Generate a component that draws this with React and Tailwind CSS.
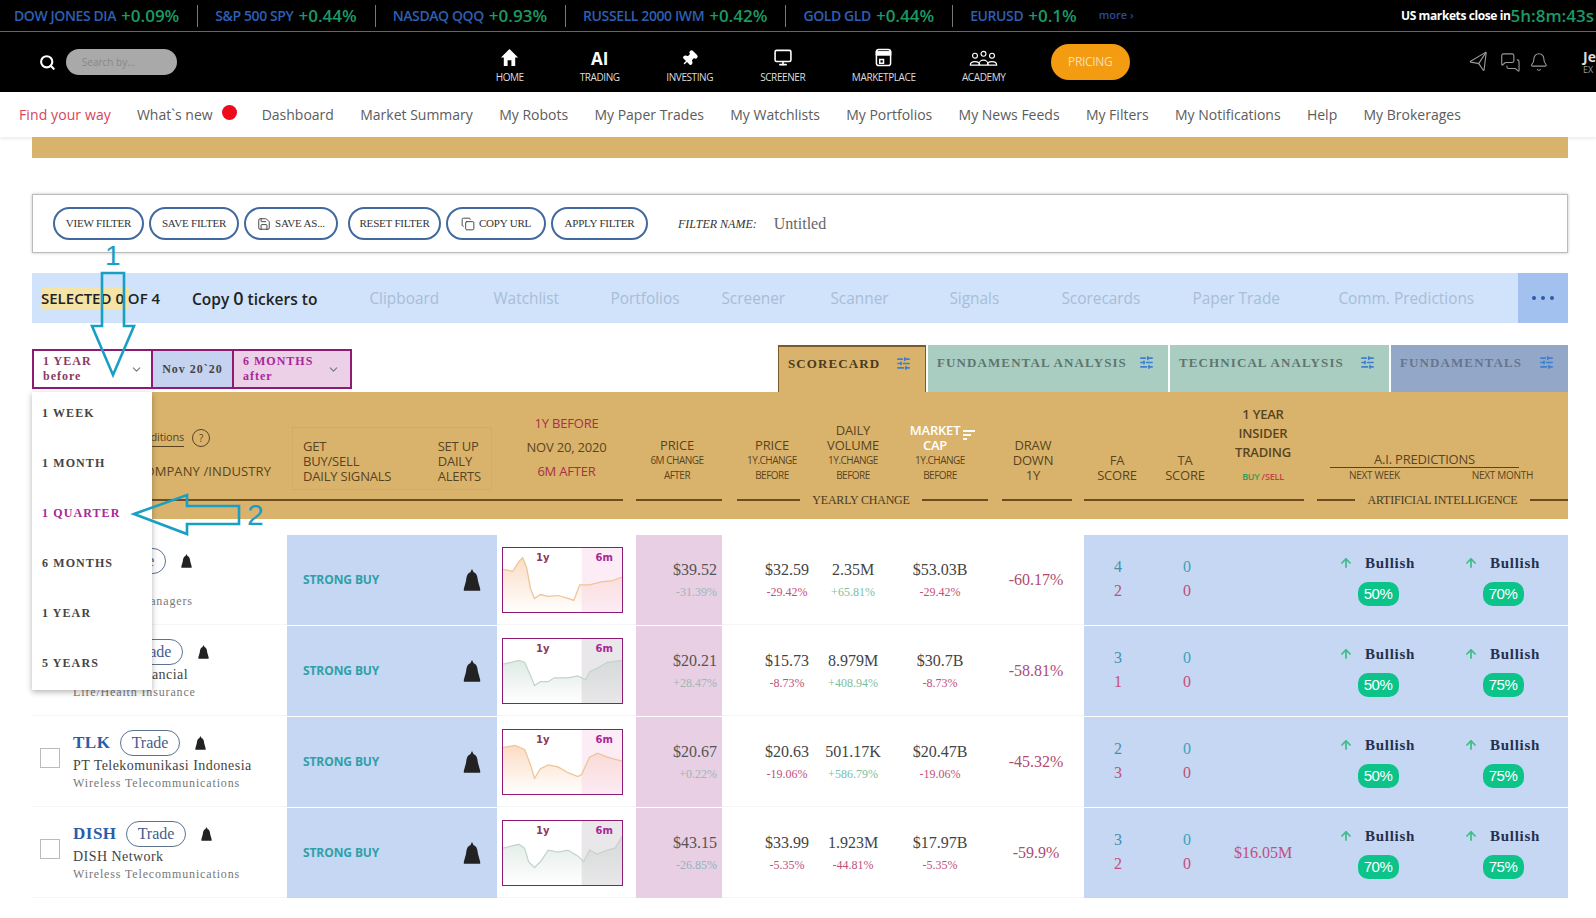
import React from "react";
import { Search, Monitor, Send, MessagesSquare, Bell, SlidersHorizontal, Save, Copy, ChevronDown, Pin, ArrowUp } from "lucide-react";

const tickers = [
  { name: "DOW JONES DIA", pct: "+0.09%" },
  { name: "S&P 500 SPY", pct: "+0.44%" },
  { name: "NASDAQ QQQ", pct: "+0.93%" },
  { name: "RUSSELL 2000 IWM", pct: "+0.42%" },
  { name: "GOLD GLD", pct: "+0.44%" },
  { name: "EURUSD", pct: "+0.1%", last: true },
];

const subLinks = ["Dashboard", "Market Summary", "My Robots", "My Paper Trades", "My Watchlists", "My Portfolios", "My News Feeds", "My Filters", "My Notifications", "Help", "My Brokerages"];

const copyTargets = [
  { label: "Clipboard", w: "w-[124px]" },
  { label: "Watchlist", w: "w-[117px]" },
  { label: "Portfolios", w: "w-[111px]" },
  { label: "Screener", w: "w-[109px]" },
  { label: "Scanner", w: "w-[119px]" },
  { label: "Signals", w: "w-[112px]" },
  { label: "Scorecards", w: "w-[131px]" },
  { label: "Paper Trade", w: "w-[146px]" },
  { label: "Comm. Predictions", w: "w-[178px]" },
];

const rows = [
  { sym: "AB", symW: "w-[23px]", name: "AB Holding", ind: "Investment Managers", spark: "orange", line: "M0 22 L10 24 L16 14 L20 10 L24 20 L28 42 L32 52 L38 48 L46 50 L56 49 L66 52 L72 54 L78 38 L88 38 L100 35 L110 34 L121 30", price: "$39.52", pc: "-31.39%", pcC: "text-[#9fb6b4]", bp: "$32.59", bc: "-29.42%", v: "2.35M", vc: "+65.81%", vC: "text-[#7cc0a0]", m: "$53.03B", mc: "-29.42%", dd: "-60.17%", fa: ["4", "2"], ta: ["0", "0"], w: "50%", n: "70%" },
  { sym: "MFC", symW: "w-[40px]", name: "Manulife Financial", ind: "Life/Health Insurance", spark: "green", line: "M0 26 L8 24 L16 22 L22 24 L28 38 L32 48 L38 44 L46 44 L52 40 L66 40 L76 38 L84 42 L88 34 L96 30 L106 24 L121 22", price: "$20.21", pc: "+28.47%", pcC: "text-[#9fb6b4]", bp: "$15.73", bc: "-8.73%", v: "8.979M", vc: "+408.94%", vC: "text-[#7cc0a0]", m: "$30.7B", mc: "-8.73%", dd: "-58.81%", fa: ["3", "1"], ta: ["0", "0"], w: "50%", n: "75%" },
  { sym: "TLK", symW: "w-[37px]", check: true, name: "PT Telekomunikasi Indonesia", ind: "Wireless Telecommunications", spark: "orange", line: "M0 18 L12 16 L22 20 L28 36 L32 50 L38 40 L46 36 L56 38 L66 44 L76 48 L80 46 L88 28 L96 24 L106 28 L121 32", price: "$20.67", pc: "+0.22%", pcC: "text-[#9fb6b4]", bp: "$20.63", bc: "-19.06%", v: "501.17K", vc: "+586.79%", vC: "text-[#7cc0a0]", m: "$20.47B", mc: "-19.06%", dd: "-45.32%", fa: ["2", "3"], ta: ["0", "0"], w: "50%", n: "75%" },
  { sym: "DISH", symW: "w-[43px]", check: true, name: "DISH Network", ind: "Wireless Telecommunications", spark: "green", line: "M0 28 L8 26 L16 24 L22 28 L26 42 L32 48 L38 42 L46 30 L56 32 L66 30 L76 36 L82 42 L88 30 L96 34 L106 30 L114 28 L121 16", price: "$43.15", pc: "-26.85%", pcC: "text-[#8fb4c0]", bp: "$33.99", bc: "-5.35%", v: "1.923M", vc: "-44.81%", vC: "text-[#c0507a]", m: "$17.97B", mc: "-5.35%", dd: "-59.9%", fa: ["3", "2"], ta: ["0", "0"], insider: "$16.05M", w: "70%", n: "75%" },
];

const BlackBell = ({ className }) => (
  <svg viewBox="0 0 16 22" className={className} fill="#222">
    <path d="M8 0 L9.5 3 C12.5 4 13 7 13.5 11 L15.5 18 L15.5 20 L0.5 20 L0.5 18 L2.5 11 C3 7 3.5 4 6.5 3 Z" />
  </svg>
);

const NavItem = ({ width, label, children }) => (
  <div className={`flex flex-col items-center ${width}`}>
    <div className="h-[24px] flex items-end justify-center translate-y-[1px]">{children}</div>
    <span className="mt-[5px] text-[10px] leading-[12px] text-[#ddd] tracking-[-0.4px]">{label}</span>
  </div>
);

const FilterButton = ({ width, icon, className, children }) => (
  <button className={`${width} ${className || ""} h-[33px] shrink-0 flex items-center justify-center gap-[4px] rounded-full border-2 border-[#41699f] text-[11px] text-[#333] font-['Liberation_Serif',serif] tracking-[-0.2px]`}>
    {icon}
    {children}
  </button>
);

const Tab = ({ width, bg, text, label }) => (
  <div className={`${width} ${bg} ${text} h-full flex items-center justify-between pl-[9px] pr-[14px] font-['Liberation_Serif',serif] font-bold text-[13px] tracking-[1.1px]`}>
    <span className="whitespace-nowrap -mt-[12px]">{label}</span>
    <SlidersHorizontal className="w-[15px] h-[15px] -mt-[12px] text-[#3f7fd0]" strokeWidth={2.6} />
  </div>
);

const Spark = ({ id, kind, line }) => {
  const stroke = kind === "orange" ? "#eec596" : "#c4d4cc";
  const fill = kind === "orange" ? "#fbdcc4" : "#dfeae5";
  return (
    <div className="relative w-[121px] h-[66px] border border-[#8e1a74] bg-white overflow-hidden">
      <svg viewBox="0 0 121 66" className="absolute inset-0 w-full h-full" preserveAspectRatio="none">
        <defs>
          <linearGradient id={id} x1="0" y1="0" x2="0" y2="1">
            <stop offset="0" stopColor={fill} />
            <stop offset="1" stopColor="#ffffff" />
          </linearGradient>
        </defs>
        <path d={`${line} L121 66 L0 66 Z`} fill={`url(#${id})`} />
        <rect x="80" y="0" width="41" height="66" fill={kind === "orange" ? "#f7cfe6" : "#c9c4c9"} opacity="0.4" />
        <path d={line} fill="none" stroke={stroke} strokeWidth="1.3" />
      </svg>
      <span className="absolute left-[33px] top-[2px] text-[10px] font-bold text-[#8a3a60] font-['DejaVu_Sans',sans-serif]">1y</span>
      <span className="absolute right-[9px] top-[2px] text-[10px] font-bold text-[#a8279a] font-['DejaVu_Sans',sans-serif]">6m</span>
    </div>
  );
};

const Bullish = ({ value, width }) => (
  <div className={`${width} -mt-[2px] flex flex-col items-center`}>
    <div className="flex items-center gap-[12px] -ml-[2px]">
      <ArrowUp className="w-[14px] h-[18px] text-[#3fbe8a]" strokeWidth={3} />
      <span className="font-bold text-[15px] tracking-[0.7px] text-[#25304f]">Bullish</span>
    </div>
    <span className="mt-[8px] w-[41px] h-[24px] rounded-[10px] bg-[#0cc48a] flex items-center justify-center text-white text-[15px] font-['Liberation_Sans',sans-serif] tracking-[-0.5px]">{value}</span>
  </div>
);

const TableRow = ({ r }) => (
  <div className="flex h-[90px] pl-[32px] mb-[1px] font-['Liberation_Serif',serif]">
    <div className="w-[255px] flex items-center border-b border-[#f5f5f5]">
      <div className="w-[41px] pl-[8px]">
        {r.check && <div className="-mt-[8px] w-[20px] h-[20px] border border-[#bbb] bg-white" />}
      </div>
      <div className="-mt-[2px] flex flex-col">
        <div className="flex items-center">
          <span className={`${r.symW} text-[17px] leading-[26px] font-bold tracking-[0.5px] text-[#2a5ca8]`}>{r.sym}</span>
          <span className="ml-[10px] w-[60px] h-[26px] rounded-full border border-[#5c7390] flex items-center justify-center text-[16px] text-[#45608e]">Trade</span>
          <BlackBell className="ml-[14px] w-[13px] h-[15px]" />
        </div>
        <span className="mt-[1px] text-[14px] leading-[17px] text-[#444] tracking-[0.45px] whitespace-nowrap">{r.name}</span>
        <span className="mt-[2px] text-[12px] leading-[15px] text-[#777] tracking-[0.85px] whitespace-nowrap">{r.ind}</span>
      </div>
    </div>
    <div className="w-[210px] bg-[#c5d7f2] flex items-center justify-between pl-[16px] pr-[16px]">
      <span className="text-[12px] font-bold text-[#2f9fa8] font-['Open_Sans',sans-serif] tracking-[-0.1px]">STRONG BUY</span>
      <BlackBell className="mt-[2px] w-[18px] h-[24px]" />
    </div>
    <div className="w-[139px] px-[5px] flex items-center border-b border-[#f5f5f5]">
      <Spark id={`spark-${r.sym}`} kind={r.spark} line={r.line} />
    </div>
    <div className="w-[86px] bg-[#e8cfe3] flex flex-col items-end justify-center pr-[5px]">
      <span className="text-[16px] leading-[24px] text-[#555]">{r.price}</span>
      <span className={`text-[12px] leading-[20px] ${r.pcC}`}>{r.pc}</span>
    </div>
    <div className="w-[362px] flex items-center pl-[30px] pr-[8px] border-b border-[#f5f5f5]">
      <div className="w-[70px] flex flex-col items-center">
        <span className="text-[16px] leading-[24px] text-[#444]">{r.bp}</span>
        <span className="text-[12px] leading-[20px] text-[#c0507a]">{r.bc}</span>
      </div>
      <div className="w-[62px] flex flex-col items-center">
        <span className="text-[16px] leading-[24px] text-[#444]">{r.v}</span>
        <span className={`text-[12px] leading-[20px] ${r.vC}`}>{r.vc}</span>
      </div>
      <div className="w-[112px] flex flex-col items-center">
        <span className="text-[16px] leading-[24px] text-[#444]">{r.m}</span>
        <span className="text-[12px] leading-[20px] text-[#c0507a]">{r.mc}</span>
      </div>
      <div className="w-[80px] text-center text-[16px] text-[#b04a70]">{r.dd}</div>
    </div>
    <div className="w-[484px] bg-[#c5d7f2] flex items-center">
      <div className="w-[68px] -mt-[2px] flex flex-col items-center text-[16px] leading-[24px]">
        <span className="text-[#4a8fa8]">{r.fa[0]}</span>
        <span className="text-[#c0507a]">{r.fa[1]}</span>
      </div>
      <div className="w-[70px] -mt-[2px] flex flex-col items-center text-[16px] leading-[24px]">
        <span className="text-[#3fa3b8]">{r.ta[0]}</span>
        <span className="text-[#c0507a]">{r.ta[1]}</span>
      </div>
      <div className="w-[82px] text-center text-[16px] text-[#c0507a]">{r.insider}</div>
      <Bullish value={r.w} width="w-[148px]" />
      <Bullish value={r.n} width="w-[102px]" />
    </div>
  </div>
);

const HeadCell = ({ width, big, small, className }) => (
  <div className={`${width} ${className || ""} flex flex-col items-center text-center`}>
    {big.map((t) => (
      <span key={t} className="text-[13px] leading-[15px]">{t}</span>
    ))}
    {small.map((t) => (
      <span key={t} className="text-[10px] leading-[15px] tracking-[-0.5px]">{t}</span>
    ))}
  </div>
);

export default function App() {
  return (
    <div className="relative w-[1596px] h-[918px] overflow-hidden bg-white font-['Open_Sans',sans-serif]">
      {/* ticker strip */}
      <div className="h-[32px] bg-black border-b border-[#666] flex items-center pl-[14px] whitespace-nowrap">
        {tickers.map((t) => (
          <div key={t.name} className={`flex items-center h-[22px] ${t.last ? "" : "border-r border-[#777] pr-[18px] mr-[17px]"}`}>
            <span className="text-[14px] font-semibold text-[#2d5fb4] tracking-[-0.4px]">{t.name}</span>
            <span className="ml-[5px] text-[17px] font-semibold text-[#1b9a64]">{t.pct}</span>
          </div>
        ))}
        <span className="ml-[22px] text-[11px] font-semibold text-[#2a4a9a]">more ›</span>
        <span className="ml-auto text-[12px] font-bold text-white tracking-[-0.4px]">US markets close in</span>
        <span className="text-[17px] text-[#1b9a64] font-semibold pr-[2px]">5h:8m:43s</span>
      </div>

      {/* main nav */}
      <div className="h-[60px] bg-black flex items-center overflow-hidden">
        <Search className="ml-[39px] w-[17px] h-[17px] text-white" strokeWidth={3} />
        <div className="ml-[10px] w-[112px] h-[26px] rounded-full bg-[#a9a9a9] flex items-center pl-[16px] text-[10px] text-[#888]">Search by...</div>
        <div className="ml-[288px] flex items-center">
          <NavItem width="w-[90px]" label="HOME">
            <svg viewBox="0 0 20 20" className="w-[19px] h-[19px]" fill="white"><path d="M10 1 L19 10 L16 10 L16 19 L12 19 L12 13 L8 13 L8 19 L4 19 L4 10 L1 10 Z" /></svg>
          </NavItem>
          <NavItem width="w-[90px]" label="TRADING">
            <span className="text-[17px] leading-[22px] font-bold text-white translate-y-[3px]">AI</span>
          </NavItem>
          <NavItem width="w-[90px]" label="INVESTING">
            <Pin className="w-[17px] h-[17px] text-white rotate-45" fill="white" />
          </NavItem>
          <NavItem width="w-[96px]" label="SCREENER">
            <Monitor className="w-[20px] h-[19px] text-white" strokeWidth={2} />
          </NavItem>
          <NavItem width="w-[106px]" label="MARKETPLACE">
            <svg viewBox="0 0 18 20" className="w-[17px] h-[19px]" fill="none" stroke="white" strokeWidth="1.6"><rect x="1.5" y="1.5" width="15" height="17" rx="2.5" /><path d="M1.5 7 H16.5 M5 12 H9 V16 H5 Z" /><rect x="1.5" y="4" width="15" height="3" fill="white" /></svg>
          </NavItem>
          <NavItem width="w-[94px]" label="ACADEMY">
            <svg viewBox="0 0 30 18" className="w-[29px] h-[17px]" fill="none" stroke="white" strokeWidth="1.2"><circle cx="6" cy="6" r="2.6" /><circle cx="15" cy="4" r="2.6" /><circle cx="24" cy="6" r="2.6" /><path d="M1 16 C1 11 11 11 11 16 Z M10 16 C10 9 20 9 20 16 Z M19 16 C19 11 29 11 29 16 Z" /></svg>
          </NavItem>
        </div>
        <button className="ml-[20px] w-[80px] h-[36px] rounded-full bg-[#f39c12] text-[#f5dfb5] text-[12px] tracking-[-0.3px]">PRICING</button>
        <Send className="ml-[339px] w-[21px] h-[21px] text-[#999] -rotate-12" strokeWidth={1.3} />
        <MessagesSquare className="ml-[10px] w-[21px] h-[21px] text-[#999]" strokeWidth={1.3} />
        <Bell className="ml-[9px] w-[20px] h-[22px] text-[#999]" strokeWidth={1.3} />
        <div className="ml-[34px] flex flex-col shrink-0">
          <span className="text-[14px] leading-[16px] font-bold text-[#ddd]">Je</span>
          <span className="text-[9px] leading-[10px] text-[#999]">EX</span>
        </div>
      </div>

      {/* secondary nav */}
      <div className="h-[45px] flex items-center pl-[19px] text-[14px] text-[#5c5c5c] whitespace-nowrap shadow-[0_2px_3px_rgba(0,0,0,0.08)]">
        <span className="text-[#d8445a] tracking-[0.1px]">Find your way</span>
        <span className="ml-[26px]">What`s new</span>
        <span className="ml-[9px] -mt-[4px] w-[15px] h-[15px] rounded-full bg-[#ee0a1c]" />
        <div className="ml-[25px] flex gap-[26.3px]">
          {subLinks.map((l) => (
            <span key={l}>{l}</span>
          ))}
        </div>
      </div>

      <div className="ml-[32px] w-[1536px] h-[21px] bg-[#d9b36c]" />

      {/* filter box */}
      <div className="mt-[36px] ml-[32px] w-[1536px] h-[59px] border border-[#bbb] shadow-[0_0_3px_rgba(0,0,0,0.25)] flex items-center pl-[20px] gap-[5px] whitespace-nowrap">
        <FilterButton width="w-[91px]">VIEW FILTER</FilterButton>
        <FilterButton width="w-[90px]">SAVE FILTER</FilterButton>
        <FilterButton width="w-[94px]" icon={<Save className="w-[14px] h-[14px]" strokeWidth={1.5} />}>SAVE AS...</FilterButton>
        <FilterButton width="w-[93px]" className="ml-[5px]">RESET FILTER</FilterButton>
        <FilterButton width="w-[100px]" icon={<Copy className="w-[14px] h-[14px]" strokeWidth={1.5} />}>COPY URL</FilterButton>
        <FilterButton width="w-[97px]">APPLY FILTER</FilterButton>
        <span className="ml-[25px] text-[12px] italic text-[#333] font-['Liberation_Serif',serif]">FILTER NAME:</span>
        <span className="ml-[12px] text-[16px] text-[#666] font-['Liberation_Serif',serif]">Untitled</span>
      </div>

      {/* selection bar */}
      <div className="mt-[20px] ml-[32px] w-[1536px] h-[50px] bg-[#d0e3fb] flex items-center pl-[9px] whitespace-nowrap">
        <span className="w-[151px] text-[15px] font-semibold text-[#222] bg-[linear-gradient(90deg,#f6e3a6_0,#f6e3a6_58%,transparent_58%)]">SELECTED 0 OF 4</span>
        <span className="text-[15.5px] font-semibold text-[#222]">Copy <span className="text-[18px]">0</span> tickers to</span>
        <div className="ml-[52px] mt-[2px] flex text-[15.4px] text-[#a8bdd6]">
          {copyTargets.map((c) => (
            <span key={c.label} className={c.w}>{c.label}</span>
          ))}
        </div>
        <div className="ml-auto w-[50px] h-full bg-[#a3c1ee] flex items-center justify-center gap-[5px]">
          <span className="w-[4px] h-[4px] rounded-full bg-[#2a5ca8]" />
          <span className="w-[4px] h-[4px] rounded-full bg-[#2a5ca8]" />
          <span className="w-[4px] h-[4px] rounded-full bg-[#2a5ca8]" />
        </div>
      </div>

      {/* period selector and tabs */}
      <div className="mt-[22px] ml-[32px] w-[1536px] h-[47px] flex font-['Liberation_Serif',serif]">
        <div className="mt-[4px] h-[40px] flex border-2 border-[#8e1a74] text-[12px] font-bold tracking-[1px]">
          <div className="w-[117px] flex items-center justify-between pl-[9px] pr-[8px] text-[#8a3a60]">
            <div className="flex flex-col leading-[15px]"><span>1 YEAR</span><span>before</span></div>
            <ChevronDown className="w-[13px] h-[13px] text-[#777]" />
          </div>
          <div className="w-[81px] border-l-2 border-[#8e1a74] bg-[#c5d3f0] flex items-center justify-center text-[#444] whitespace-nowrap">Nov 20`20</div>
          <div className="w-[118px] border-l-2 border-[#8e1a74] bg-[#ebd0e8] flex items-center justify-between pl-[9px] pr-[10px] text-[#a8279a]">
            <div className="flex flex-col leading-[15px]"><span>6 MONTHS</span><span>after</span></div>
            <ChevronDown className="w-[13px] h-[13px] text-[#777]" />
          </div>
        </div>
        <div className="ml-auto flex gap-[2px] h-full">
          <div className="border-t-2 border-l border-r border-[#7a5a28]">
            <Tab width="w-[146px]" bg="bg-[#d9b36c]" text="text-[#4a3a20]" label="SCORECARD" />
          </div>
          <Tab width="w-[240px]" bg="bg-[#a9cdc0]" text="text-[#5f7570]" label="FUNDAMENTAL ANALYSIS" />
          <Tab width="w-[219px]" bg="bg-[#a9cdc0]" text="text-[#5f7570]" label="TECHNICAL ANALYSIS" />
          <Tab width="w-[177px]" bg="bg-[#93a8c8]" text="text-[#66758f]" label="FUNDAMENTALS" />
        </div>
      </div>

      {/* table header */}
      <div className="ml-[32px] w-[1536px] h-[127px] bg-[#d9b36c] text-[#5a4420] flex flex-col">
        <div className="h-[100px] flex items-end tracking-[-0.2px]">
          <div className="w-[255px] h-full flex flex-col items-end pr-[16px]">
            <div className="mt-[37px] mr-[61px] flex items-center">
              <span className="text-[11px] border-b border-[#5a4420]">Conditions</span>
              <span className="ml-[8px] w-[18px] h-[18px] rounded-full border border-[#5a4420] flex items-center justify-center text-[10px]">?</span>
            </div>
            <span className="mt-[15px] text-[13px] tracking-[0.1px]">COMPANY /INDUSTRY</span>
          </div>
          <div className="w-[200px] h-[63px] mb-[2px] ml-[5px] mr-[5px] border border-dotted border-[#c9a660] flex justify-between pl-[10px] pr-[10px] pt-[11px] text-[13px] leading-[15px]">
            <div className="flex flex-col"><span>GET</span><span>BUY/SELL</span><span>DAILY SIGNALS</span></div>
            <div className="flex flex-col"><span>SET UP</span><span>DAILY</span><span>ALERTS</span></div>
          </div>
          <div className="w-[139px] h-full pt-[19px] flex flex-col items-center text-[13px] leading-[24px]">
            <span className="text-[#a8304a]">1Y BEFORE</span>
            <span>NOV 20, 2020</span>
            <span className="text-[#a8304a]">6M AFTER</span>
          </div>
          <HeadCell width="w-[86px]" className="mb-[9px] pr-[4px]" big={["PRICE"]} small={["6M CHANGE", "AFTER"]} />
          <HeadCell width="w-[100px]" className="mb-[9px]" big={["PRICE"]} small={["1Y.CHANGE", "BEFORE"]} />
          <div className="w-[62px] mb-[9px] flex flex-col items-center text-center">
            <span className="text-[13px] leading-[15px]">DAILY</span>
            <span className="text-[13px] leading-[15px]">VOLUME</span>
            <span className="text-[10px] leading-[15px] tracking-[-0.5px]">1Y.CHANGE</span>
            <span className="text-[10px] leading-[15px] tracking-[-0.5px]">BEFORE</span>
          </div>
          <div className="w-[112px] mb-[9px] flex flex-col items-center text-center">
            <div className="relative -ml-[10px] flex flex-col items-center text-white text-[13px] leading-[15px] font-semibold">
              <span>MARKET</span>
              <span>CAP</span>
              <span className="absolute -right-[15px] top-[7px] flex flex-col gap-[2px] items-start">
                <span className="w-[12px] h-[2px] bg-white" />
                <span className="w-[8px] h-[2px] bg-white" />
                <span className="w-[4px] h-[2px] bg-white" />
              </span>
            </div>
            <span className="text-[10px] leading-[15px] tracking-[-0.5px]">1Y.CHANGE</span>
            <span className="text-[10px] leading-[15px] tracking-[-0.5px]">BEFORE</span>
          </div>
          <HeadCell width="w-[80px]" className="mb-[9px] mr-[8px] pr-[6px]" big={["DRAW", "DOWN", "1Y"]} small={[]} />
          <HeadCell width="w-[68px]" className="mb-[9px] pr-[2px]" big={["FA", "SCORE"]} small={[]} />
          <HeadCell width="w-[70px]" className="mb-[9px] pr-[4px]" big={["TA", "SCORE"]} small={[]} />
          <div className="w-[82px] mb-[9px] flex flex-col items-center text-[13px] leading-[19px] font-semibold">
            <span>1 YEAR</span>
            <span>INSIDER</span>
            <span>TRADING</span>
            <span className="mt-[9px] text-[9px] leading-[12px]"><span className="text-[#2f9a5c]">BUY</span> <span className="text-[#c0404a]">/SELL</span></span>
          </div>
          <div className="ml-[28px] w-[205px] mb-[9px] flex flex-col">
            <span className="-ml-[2px] w-[189px] text-center text-[13px] leading-[16px] border-b border-[#5a4420]">A.I. PREDICTIONS</span>
            <div className="flex justify-between pl-[17px] pr-[4px] text-[10px] leading-[15px] tracking-[-0.3px]"><span>NEXT WEEK</span><span>NEXT MONTH</span></div>
          </div>
        </div>
        <div className="h-[16px] flex items-center text-[12px] font-['Liberation_Serif',serif] text-[#4a3a20] whitespace-nowrap tracking-[-0.2px]">
          <span className="w-[591px] h-[2px] bg-[#6b4f23]" />
          <span className="ml-[13px] w-[86px] h-[2px] bg-[#6b4f23]" />
          <span className="ml-[15px] w-[63px] h-[2px] bg-[#6b4f23]" />
          <span className="w-[122px] text-center">YEARLY CHANGE</span>
          <span className="w-[66px] h-[2px] bg-[#6b4f23]" />
          <span className="ml-[14px] w-[70px] h-[2px] bg-[#6b4f23]" />
          <span className="ml-[12px] w-[220px] h-[2px] bg-[#6b4f23]" />
          <span className="ml-[13px] w-[38px] h-[2px] bg-[#6b4f23]" />
          <span className="w-[175px] text-center">ARTIFICIAL INTELLIGENCE</span>
          <span className="w-[38px] h-[2px] bg-[#6b4f23]" />
        </div>
      </div>

      {/* rows */}
      <div className="mt-[16px]">
        {rows.map((r) => (
          <TableRow key={r.sym} r={r} />
        ))}
      </div>

      {/* period dropdown, open over the table */}
      <div className="absolute left-[32px] top-[392px] w-[120px] h-[298px] bg-white shadow-[0_2px_6px_rgba(0,0,0,0.3)] flex flex-col gap-[8px] pl-[10px] text-[12px] font-bold tracking-[1.1px] text-[#444] font-['Liberation_Serif',serif]">
        <span className="h-[42px] flex items-center">1 WEEK</span>
        <span className="h-[42px] flex items-center">1 MONTH</span>
        <span className="h-[42px] flex items-center text-[#a8279a]">1 QUARTER</span>
        <span className="h-[42px] flex items-center">6 MONTHS</span>
        <span className="h-[42px] flex items-center">1 YEAR</span>
        <span className="h-[42px] flex items-center">5 YEARS</span>
      </div>

      {/* callout arrows drawn on top of the screenshot */}
      <svg viewBox="0 0 280 300" className="absolute left-0 top-[245px] w-[280px] h-[300px] pointer-events-none" fill="none" stroke="#1a9fc4" strokeWidth="2.6">
        <path d="M102 28 H124 V81 H134 L113 130 L92 81 H102 Z" />
        <path d="M134 269 L187 250 V261 H239 V279 H187 V289 Z" />
      </svg>
      <span className="absolute left-[105px] top-[241px] text-[28px] leading-[30px] text-[#1a9fc4] font-['Liberation_Sans',sans-serif]">1</span>
      <span className="absolute left-[247px] top-[498px] text-[30px] leading-[34px] text-[#1a9fc4] font-['Liberation_Sans',sans-serif]">2</span>
    </div>
  );
}
